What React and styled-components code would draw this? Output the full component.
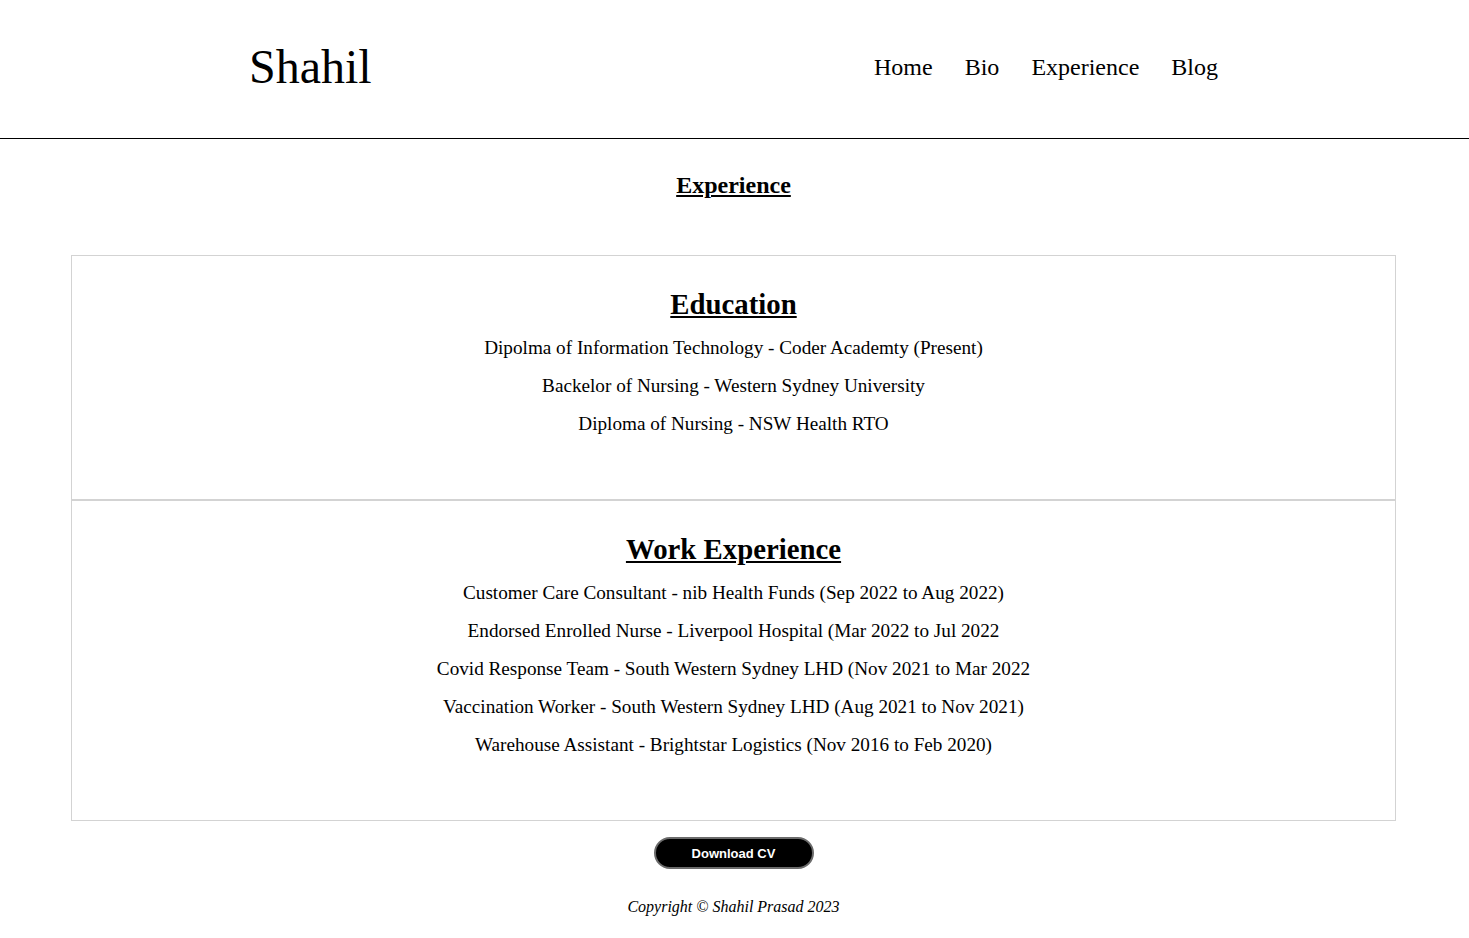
import styled, { createGlobalStyle } from 'styled-components';

const GlobalStyle = createGlobalStyle`
  html, body {
    margin: 0;
    padding: 0;
    background: #ffffff;
    color: #000000;
    font-family: "Liberation Serif", "Times New Roman", serif;
  }
`;

const education = [
  'Dipolma of Information Technology - Coder Academty (Present)',
  'Backelor of Nursing - Western Sydney University',
  'Diploma of Nursing - NSW Health RTO',
];

const work = [
  'Customer Care Consultant - nib Health Funds (Sep 2022 to Aug 2022)',
  'Endorsed Enrolled Nurse - Liverpool Hospital (Mar 2022 to Jul 2022',
  'Covid Response Team - South Western Sydney LHD (Nov 2021 to Mar 2022',
  'Vaccination Worker - South Western Sydney LHD (Aug 2021 to Nov 2021)',
  'Warehouse Assistant - Brightstar Logistics (Nov 2016 to Feb 2020)',
];

function App() {
  return (
    <>
      <GlobalStyle />
      <Header>
        <Logo>Shahil</Logo>
        <Nav>
          <NavLink>Home</NavLink>
          <NavLink>Bio</NavLink>
          <NavLink>Experience</NavLink>
          <NavLink>Blog</NavLink>
        </Nav>
      </Header>
      <Main>
        <PageTitle>Experience</PageTitle>
        <Panel>
          <Section>
            <SectionTitle>Education</SectionTitle>
            {education.map((item) => (
              <Item key={item}>{item}</Item>
            ))}
          </Section>
          <Section>
            <SectionTitle>Work Experience</SectionTitle>
            {work.map((item) => (
              <Item key={item}>{item}</Item>
            ))}
          </Section>
        </Panel>
        <DownloadButton>Download CV</DownloadButton>
        <Copyright>Copyright © Shahil Prasad 2023</Copyright>
      </Main>
    </>
  );
}

export default App;

const Header = styled.header`
  height: 139px;
  box-sizing: border-box;
  display: flex;
  align-items: center;
  justify-content: space-between;
  padding: 0 251px 4px 249px;
  border-bottom: 1px solid #000;
`;

const Logo = styled.div`
  font-size: 48px;
  line-height: 1;
`;

const Nav = styled.nav`
  display: flex;
  gap: 32px;
`;

const NavLink = styled.a`
  font-size: 24px;
  color: #000;
  text-decoration: none;
  cursor: pointer;
`;

const Main = styled.main`
  display: flex;
  flex-direction: column;
  align-items: center;
  padding-top: 32px;
`;

const PageTitle = styled.h1`
  margin: 0 2px 56px 0;
  font-size: 24px;
  line-height: 28px;
  font-weight: bold;
  text-decoration: underline;
`;

const Panel = styled.div`
  width: 1325px;
  margin-right: 2px;
  display: flex;
  flex-direction: column;
`;

const Section = styled.section`
  border: 1px solid #d3d3d3;
  padding: 31px 0 64px;
  display: flex;
  flex-direction: column;
  align-items: center;
  gap: 16px;
`;

const SectionTitle = styled.h2`
  margin: 0;
  font-size: 28.8px;
  line-height: 34px;
  font-weight: bold;
  text-decoration: underline;
`;

const Item = styled.p`
  margin: 0;
  font-size: 19.2px;
  line-height: 22px;
`;

const DownloadButton = styled.button`
  margin: 16px 2px 0 0;
  width: 160px;
  height: 32px;
  border-radius: 16px;
  border: 2px solid #6b6b6b;
  background: #000;
  color: #fff;
  font-family: "Liberation Sans", Arial, sans-serif;
  font-size: 13px;
  font-weight: bold;
  cursor: pointer;
`;

const Copyright = styled.p`
  margin: 29px 2px 0 0;
  font-size: 16px;
  line-height: 18px;
  font-style: italic;
`;
